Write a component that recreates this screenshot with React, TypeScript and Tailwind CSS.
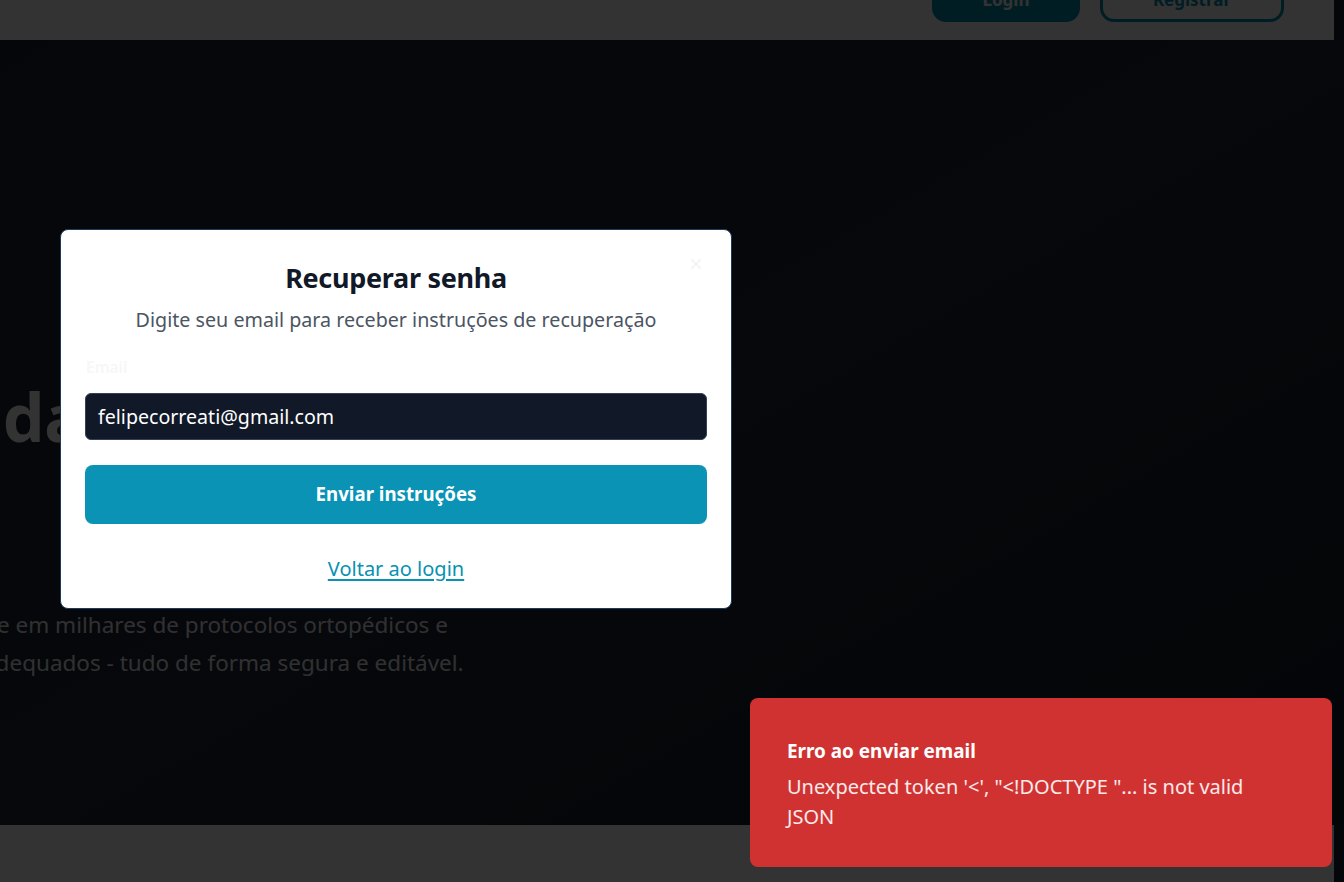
import React from "react";

export default function App() {
  return (
    <div className="relative w-[1344px] h-[882px] overflow-hidden bg-[#1b2232] font-['Noto_Sans',sans-serif]">
      <div className="flex flex-col h-full">
        <header className="h-[40px] w-[1334px] bg-white shrink-0 flex items-start">
          <div className="flex gap-[20px] ml-[932px] -mt-[22px]">
            <button className="w-[148px] h-[44px] rounded-[14px] bg-[#0891b2] text-white font-bold text-[17px]">Login</button>
            <button className="w-[184px] h-[44px] rounded-[14px] border-[3px] border-[#0891b2] text-[#0891b2] font-bold text-[17px]">Registrar</button>
          </div>
        </header>
        <main className="flex-1 bg-gradient-to-br from-[#1a2232] via-[#1f2838] to-[#141a26] overflow-hidden">
          <div className="pt-[336px] -ml-[60px] whitespace-nowrap">
            <h1 className="text-[66px] leading-[80px] font-bold text-white">Vida</h1>
          </div>
          <div className="mt-[150px] whitespace-nowrap text-[22.5px] leading-[38px] text-white/95">
            <p className="-ml-[3px]">e em milhares de protocolos ortopédicos e</p>
            <p className="-ml-[17px]">adequados - tudo de forma segura e editável.</p>
          </div>
        </main>
        <footer className="h-[57px] w-[1334px] bg-white shrink-0" />
      </div>

      <div className="absolute inset-0 bg-black/80" />

      <div className="absolute left-[60px] top-[229px] w-[672px] rounded-[8px] border border-[#1e3a5f] bg-white px-[24px] pt-[31px] pb-[25px]">
        <svg className="absolute left-[626px] top-[25px] w-[18px] h-[18px]" viewBox="0 0 24 24" fill="none" stroke="#eef2f4" strokeWidth="2" strokeLinecap="round">
          <path d="M18 6 6 18" />
          <path d="m6 6 12 12" />
        </svg>
        <h2 className="text-center text-[27px] leading-[34px] font-bold text-[#111827] tracking-[-0.3px]">Recuperar senha</h2>
        <p className="mt-[11px] text-center text-[19.7px] leading-[28px] text-[#4b5563]">Digite seu email para receber instruções de recuperação</p>
        <label className="block mt-[23px] ml-[1px] text-[15.5px] leading-[20px] font-semibold text-[#f6f7f8]">Email</label>
        <div className="mt-[16px] h-[47px] rounded-[6px] border border-[#334155] bg-[#111827] flex items-center px-[12px] text-[19.6px] text-white">felipecorreati@gmail.com</div>
        <button className="mt-[25px] w-full h-[59px] rounded-[8px] bg-[#0a93b5] text-white font-bold text-[18.7px]">Enviar instruções</button>
        <div className="mt-[31px] text-center text-[20px] leading-[28px]">
          <span className="text-[#0891b2] underline underline-offset-[3px]">Voltar ao login</span>
        </div>
      </div>

      <div className="absolute left-[750px] top-[698px] w-[582px] h-[169px] rounded-[8px] bg-[#d03232] pl-[37px] pr-[60px] pt-[40px]">
        <div className="text-[18.9px] leading-[26px] font-bold text-white">Erro ao enviar email</div>
        <div className="mt-[8px] text-[20px] leading-[30px] text-white/90">Unexpected token '&lt;', "&lt;!DOCTYPE "... is not valid JSON</div>
      </div>
    </div>
  );
}
